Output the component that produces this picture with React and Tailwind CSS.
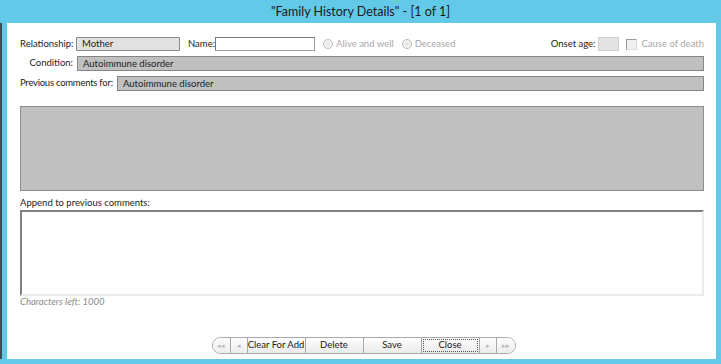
import React from 'react';

const font = { fontFamily: 'Lato, "Open Sans", Arial, sans-serif' };

const Radio = ({ label }) => (
  <label className="flex items-center gap-[3px] text-[#a8a8a8] whitespace-nowrap">
    <span className="w-[10px] h-[10px] rounded-full border border-[#b8b8b8] bg-[#f4f4f4] flex items-center justify-center">
      <span className="w-[4px] h-[4px] rounded-full bg-[#e8e8e8]" />
    </span>
    {label}
  </label>
);

const NavBtn = ({ children, className = '' }) => (
  <button className={`h-[15px] w-[17px] flex items-center justify-center text-[7px] text-[#b5b5b5] border-r border-[#a9a9a9] bg-gradient-to-b from-[#fdfdfd] to-[#ececec] ${className}`}>
    {children}
  </button>
);

const Btn = ({ children, focus }) => (
  <button className="h-[15px] w-[58px] flex items-center justify-center border-r border-[#a9a9a9] bg-gradient-to-b from-[#fdfdfd] to-[#ebebeb] text-[9.5px] text-[#1a1a1a] whitespace-nowrap">
    <span className={`w-full h-full flex items-center justify-center ${focus ? 'outline outline-1 outline-dotted outline-[#555] -outline-offset-2' : ''}`}>{children}</span>
  </button>
);

export default function App() {
  return (
    <div className="w-[721px] h-[364px] bg-[#63c9e9] flex flex-col text-[9.5px] text-[#222] whitespace-nowrap" style={font}>
      <div className="h-[23px] flex items-center justify-center text-[12.5px] text-[#1a1a1a] pt-[1px]">
        "Family History Details" - [1 of 1]
      </div>
      <div className="flex-1 flex pb-[5px] pr-[5px] min-h-0">
        <div className="w-[2px] bg-[#3e4a55]" />
        <div className="w-[5px]" />
        <div className="flex-1 min-w-0 bg-white flex flex-col pl-[13px] pr-[12px] pt-[14px]">
          <div className="flex items-center h-[14px]">
            <span className="w-[56px] shrink-0">Relationship:</span>
            <div className="w-[104px] shrink-0 h-[14px] bg-[#e1e1e1] border border-[#8e8e8e] px-[5px] leading-[12px]">Mother</div>
            <span className="ml-[8px] w-[27px] shrink-0">Name:</span>
            <div className="w-[100px] shrink-0 h-[14px] bg-white border border-[#a0a0a0] border-t-[#7a7a7a] border-l-[#7a7a7a]" />
            <div className="ml-[8px] flex gap-[8px]">
              <Radio label="Alive and well" />
              <Radio label="Deceased" />
            </div>
            <div className="flex-1" />
            <span className="mr-[2px]">Onset age:</span>
            <div className="w-[21px] shrink-0 h-[14px] bg-[#e4e4e4] border border-[#d0d0d0]" />
            <label className="ml-[7px] flex items-center gap-[5px] text-[#a8a8a8]">
              <span className="w-[11px] h-[11px] border border-[#9a9a9a] border-r-[#dcdcdc] border-b-[#dcdcdc] bg-[#f0f0f0]" />
              Cause of death
            </label>
          </div>
          <div className="flex items-center mt-[5px]">
            <span className="w-[57px] shrink-0 text-right pr-[4px]">Condition:</span>
            <div className="flex-1 h-[15px] bg-[#c0c0c0] border border-[#858585] px-[5px] leading-[13px]">Autoimmune disorder</div>
          </div>
          <div className="flex items-center mt-[5px]">
            <span className="w-[97px] shrink-0 tracking-[-0.25px]">Previous comments for:</span>
            <div className="flex-1 h-[15px] bg-[#c0c0c0] border border-[#858585] px-[5px] leading-[13px]">Autoimmune disorder</div>
          </div>
          <div className="mt-[15px] h-[85px] bg-[#c0c0c0] border border-[#8d8d8d]" />
          <div className="mt-[6px] leading-[12px]">Append to previous comments:</div>
          <div className="mt-[1px] h-[86px] bg-white border-[2px] border-[#808080] border-r-[#ececec] border-b-[#ececec]" />
          <div className="mt-0 italic text-[#8c8c8c] leading-[12px]">Characters left: 1000</div>
          <div className="flex justify-center pl-[3px] pt-[29px]">
            <div className="flex border border-[#a9a9a9] rounded-full overflow-hidden">
              <NavBtn className="rounded-l-full w-[18px]">◂◂</NavBtn>
              <NavBtn>◂</NavBtn>
              <Btn>Clear For Add</Btn>
              <Btn>Delete</Btn>
              <Btn>Save</Btn>
              <Btn focus>Close</Btn>
              <NavBtn>▸</NavBtn>
              <NavBtn className="border-r-0 w-[18px]">▸▸</NavBtn>
            </div>
          </div>
        </div>
      </div>
    </div>
  );
}
